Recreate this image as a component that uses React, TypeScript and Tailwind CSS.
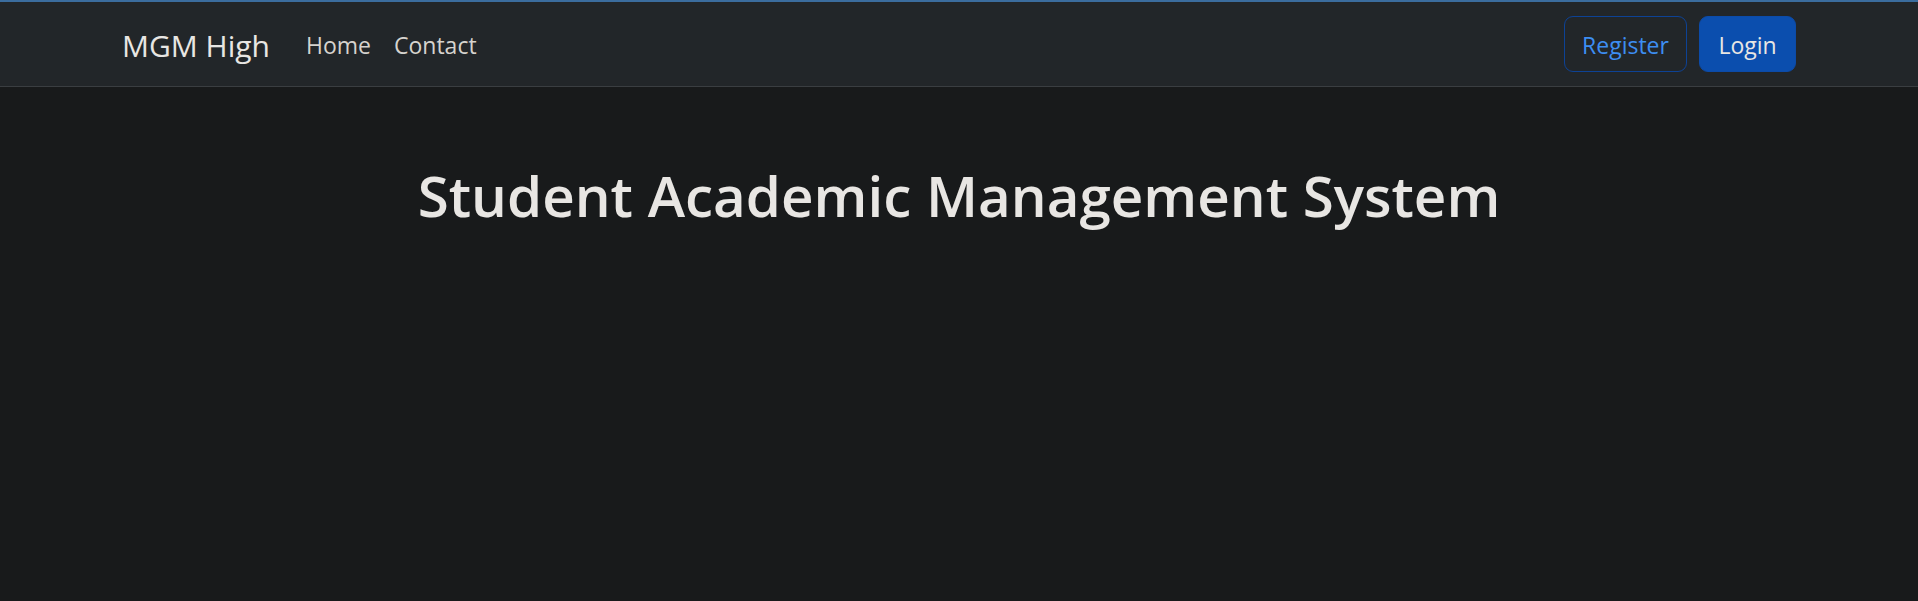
import React from "react";

const App = () => {
  return (
    <div className="min-h-[601px] bg-[#181a1b] text-[#e8e6e3]" style={{ fontFamily: '"Open Sans", "Noto Sans", sans-serif' }}>
      <nav className="h-[87px] border-t-2 border-t-[#3b6d9e] border-b border-b-[#3a3e41] bg-[#222629]">
        <div className="mx-auto flex h-full max-w-[1710px] items-center justify-between px-[18px]">
          <div className="flex items-center pt-[2px]">
            <a href="#" className="mr-[24px] text-[30px] text-[#e8e6e3]">
              MGM High
            </a>
            <ul className="flex items-center text-[23px] text-[#d6d3ce]">
              <li>
                <a href="#" className="px-[12px]">
                  Home
                </a>
              </li>
              <li>
                <a href="#" className="pl-[11px] pr-[12px]">
                  Contact
                </a>
              </li>
            </ul>
          </div>
          <div className="flex items-center gap-[12px]">
            <button className="h-[56px] w-[123px] rounded-[9px] border border-[#0d4295] pt-[2px] text-[23px] text-[#3d8ef2]">
              Register
            </button>
            <button className="h-[56px] w-[97px] rounded-[9px] border border-[#0c4ba8] bg-[#0b4eae] pt-[2px] text-[23px] text-[#e8e6e3]">
              Login
            </button>
          </div>
        </div>
      </nav>
      <main className="pt-[75px] text-center">
        <h1 className="text-[56.5px] font-semibold leading-[1.2] text-[#e8e6e3]">
          Student Academic Management System
        </h1>
      </main>
    </div>
  );
};

export default App;
